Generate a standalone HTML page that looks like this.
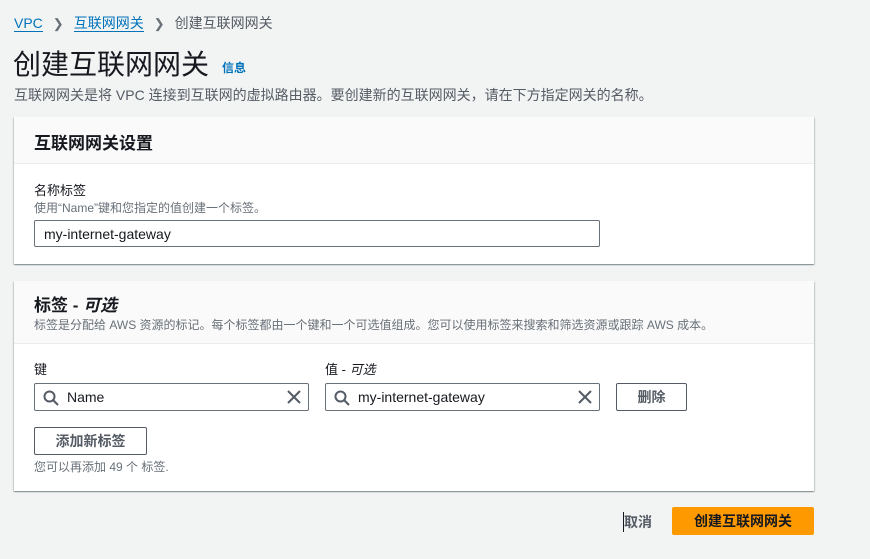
<!DOCTYPE html>
<html><head><meta charset="utf-8"><style>
*{margin:0;padding:0;box-sizing:border-box}
body{width:870px;height:559px;background:#f2f3f3;font-family:"Liberation Sans","Noto Sans CJK SC",sans-serif;color:#16191f;position:relative;overflow:hidden;font-size:14px}
.a{position:absolute;white-space:nowrap}
.panel{position:absolute;left:14px;width:800px;background:#fff;box-shadow:0 1px 1px 0 rgba(0,28,36,.3),1px 1px 1px 0 rgba(0,28,36,.15),-1px 1px 1px 0 rgba(0,28,36,.15)}
.hd{background:#fafafa;border-bottom:1px solid #eaeded}
.inp{position:absolute;border:1px solid #687078;border-radius:2px;height:28px;background:#fff}
.btn{position:absolute;border:1px solid #545b64;border-radius:2px;height:28px;font-weight:bold;color:#545b64;text-align:center;line-height:26px;font-size:14px;background:#fff}
.x{position:absolute;top:6px}
</style></head><body>
<div class="a" style="left:14px;top:13px;font-size:14px"><span style="color:#0073bb;border-bottom:1px solid #0073bb">VPC</span><span style="color:#687078;margin:0 10px 0 10px;font-size:13px">❯</span><span style="color:#0073bb;border-bottom:1px solid #0073bb">互联网网关</span><span style="color:#687078;margin:0 10px 0 10px;font-size:13px">❯</span><span style="color:#545b64">创建互联网网关</span></div>
<div class="a" style="left:13px;top:43px;font-size:28px;color:#16191f">创建互联网网关</div>
<div class="a" style="left:222px;top:59px;font-size:12px;font-weight:bold;color:#0073bb">信息</div>
<div class="a" style="left:14px;top:85px;font-size:14px;color:#545b64">互联网网关是将 VPC 连接到互联网的虚拟路由器。要创建新的互联网网关，请在下方指定网关的名称。</div>

<div class="panel" style="top:117px;height:147px">
 <div class="hd" style="height:47px"><div class="a" style="left:20px;top:12px;font-size:17px;font-weight:bold">互联网网关设置</div></div>
 <div class="a" style="left:20px;top:63px;font-size:13px">名称标签</div>
 <div class="a" style="left:20px;top:82px;font-size:12px;color:#687078">使用“Name”键和您指定的值创建一个标签。</div>
 <div class="inp" style="left:20px;top:103px;width:566px;height:27px"><div class="a" style="left:9px;top:5px;font-size:14px">my-internet-gateway</div></div>
</div>

<div class="panel" style="top:281px;height:210px">
 <div class="hd" style="height:63px">
  <div class="a" style="left:20px;top:10px;font-size:17px;font-weight:bold">标签 - <i>可选</i></div>
  <div class="a" style="left:20px;top:35px;font-size:12px;color:#687078">标签是分配给 AWS 资源的标记。每个标签都由一个键和一个可选值组成。您可以使用标签来搜索和筛选资源或跟踪 AWS 成本。</div>
 </div>
 <div class="a" style="left:20px;top:78px;font-size:13px">键</div>
 <div class="a" style="left:311px;top:78px;font-size:13px">值 - <i>可选</i></div>
 <div class="inp" style="left:20px;top:102px;width:275px">
  <svg class="a" style="left:8px;top:6px" width="16" height="16" viewBox="0 0 16 16"><circle cx="6.5" cy="6.5" r="5" fill="none" stroke="#545b64" stroke-width="2"/><line x1="10" y1="10" x2="15" y2="15" stroke="#545b64" stroke-width="2"/></svg>
  <div class="a" style="left:32px;top:5px">Name</div>
  <svg class="x" style="left:252px" width="14" height="14" viewBox="0 0 14 14"><path d="M1 1L13 13M13 1L1 13" stroke="#545b64" stroke-width="2"/></svg>
 </div>
 <div class="inp" style="left:311px;top:102px;width:275px">
  <svg class="a" style="left:8px;top:6px" width="16" height="16" viewBox="0 0 16 16"><circle cx="6.5" cy="6.5" r="5" fill="none" stroke="#545b64" stroke-width="2"/><line x1="10" y1="10" x2="15" y2="15" stroke="#545b64" stroke-width="2"/></svg>
  <div class="a" style="left:32px;top:5px">my-internet-gateway</div>
  <svg class="x" style="left:252px" width="14" height="14" viewBox="0 0 14 14"><path d="M1 1L13 13M13 1L1 13" stroke="#545b64" stroke-width="2"/></svg>
 </div>
 <div class="btn" style="left:602px;top:102px;width:71px">删除</div>
 <div class="btn" style="left:20px;top:146px;width:113px">添加新标签</div>
 <div class="a" style="left:20px;top:177px;font-size:12px;color:#687078">您可以再添加 49 个 标签.</div>
</div>

<div class="a" style="left:623px;top:512px;font-size:14px;font-weight:bold;color:#545b64;border-left:1px solid #16191f">取消</div>
<div class="a" style="left:672px;top:507px;width:142px;height:28px;background:#ff9900;border-radius:2px;text-align:center;line-height:28px;font-weight:bold;color:#16191f">创建互联网网关</div>
</body></html>
